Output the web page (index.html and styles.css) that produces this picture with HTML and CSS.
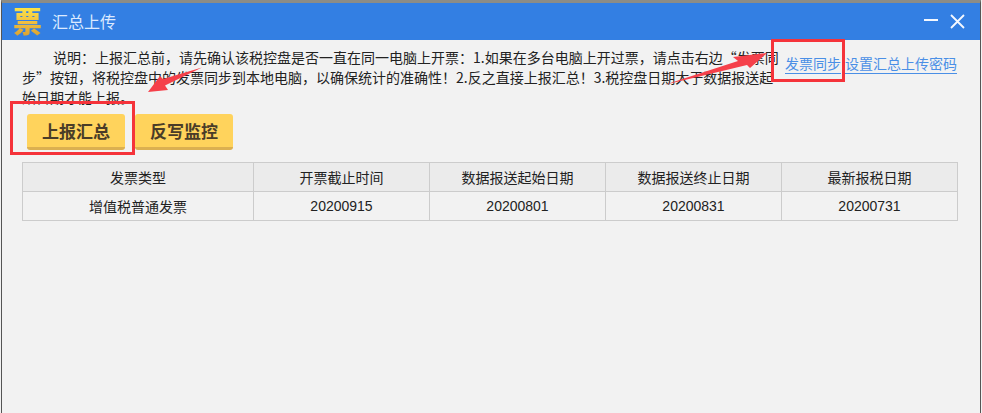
FILE: index.html
```html
<!DOCTYPE html>
<html lang="zh-CN">
<head>
<meta charset="utf-8">
<title>汇总上传</title>
<link rel="stylesheet" href="styles.css">
</head>
<body>
<div class="window">
  <header class="titlebar">
    <span class="logo">票</span>
    <span class="title">汇总上传</span>
    <span class="controls">
      <svg class="ctrl" width="14" height="14" viewBox="0 0 14 14"><path d="M0 5h14" stroke="#f4f8ff" stroke-width="2"/></svg>
      <svg class="ctrl" width="15" height="15" viewBox="0 0 15 15"><path d="M1 1l13 13M14 1L1 14" stroke="#f4f8ff" stroke-width="1.800" fill="none"/></svg>
    </span>
  </header>
  <main class="content">
    <section class="top">
      <p class="notice">说明：上报汇总前，请先确认该税控盘是否一直在同一电脑上开票：1.如果在多台电脑上开过票，请点击右边“发票同步”按钮，将税控盘中的发票同步到本地电脑，以确保统计的准确性！2.反之直接上报汇总！3.税控盘日期大于数据报送起始日期才能上报。</p>
      <nav class="links">
        <a class="link">发票同步</a>
        <a class="link">设置汇总上传密码</a>
      </nav>
    </section>
    <div class="actions">
      <button class="btn">上报汇总</button>
      <button class="btn">反写监控</button>
    </div>
    <table class="grid">
      <colgroup>
        <col class="c1"><col class="c2"><col class="c2"><col class="c2"><col class="c2">
      </colgroup>
      <thead>
        <tr><th>发票类型</th><th>开票截止时间</th><th>数据报送起始日期</th><th>数据报送终止日期</th><th>最新报税日期</th></tr>
      </thead>
      <tbody>
        <tr><td>增值税普通发票</td><td>20200915</td><td>20200801</td><td>20200831</td><td>20200731</td></tr>
      </tbody>
    </table>
  </main>
  <svg class="annot" width="982" height="413" viewBox="0 0 982 413">
    <rect x="11.500" y="102.500" width="122" height="51" fill="none" stroke="#f5333a" stroke-width="3"/>
    <rect x="772.500" y="40.500" width="71" height="40" fill="none" stroke="#f5333a" stroke-width="3"/>
    <path d="M664 85L738 61L733 57L767 53L750 68L747 65Z" fill="#f5404a"/>
    <path d="M202 67.500L163 79L160 76L148 92L168 90L165 85.500Z" fill="#f5404a"/>
  </svg>
</div>
</body>
</html>
```
FILE: styles.css
```css
* { box-sizing: border-box; }
html, body { margin: 0; padding: 0; }
body {
  width: 982px;
  height: 413px;
  overflow: hidden;
  background: #f2f2f2;
  font-family: "Noto Sans CJK SC", "Liberation Sans", sans-serif;
  color: #222;
}
.window {
  position: relative;
  width: 980px;
  height: 413px;
  margin: 0 1px;
  border-top: 3px solid #8c8c86;
  border-left: 1px solid #555;
  border-right: 1px solid #555;
  background: #f2f2f2;
  display: flex;
  flex-direction: column;
}
.titlebar {
  height: 37px;
  flex: none;
  background: #337fe3;
  display: flex;
  align-items: center;
  padding: 0 15px 0 11px;
  color: #fff;
}
.logo {
  width: 29px;
  margin-bottom: 4px;
  font-size: 29px;
  line-height: 34px;
  font-weight: 900;
  background: linear-gradient(#fff04a, #f0c040 55%, #d9a030);
  -webkit-background-clip: text;
  background-clip: text;
  color: transparent;
}
.title { margin: 0 0 2px 10px; font-size: 16px; color: #dceaff; }
.controls { margin-left: auto; display: flex; align-items: center; gap: 12px; }
.ctrl { display: block; }
.content { flex: 1; padding: 0 22px 0 20px; display: flex; flex-direction: column; }
.top { display: flex; height: 69px; }
.notice {
  width: 758px;
  margin: 7px 0 0;
  font-size: 14px;
  line-height: 20px;
  text-indent: 31px;
  color: #222;
  word-break: break-all;
}
.links { margin: 13px 0 0 5px; display: flex; gap: 4px; white-space: nowrap; }
.link {
  font-size: 14px;
  line-height: 20px;
  height: 21px;
  color: #4a8fe6;
  border-bottom: 1px solid #4a8fe6;
}
.actions { display: flex; gap: 10px; margin: 5px 0 0 5px; }
.btn {
  width: 98px;
  height: 36px;
  border: 0;
  border-bottom: 3px solid #dcb050;
  border-radius: 3px;
  background: #ffd35c;
  color: #4a3c28;
  font: 700 17px "Noto Sans CJK SC", sans-serif;
  padding: 0;
}
.grid {
  width: 935px;
  margin-top: 12px;
  border-collapse: collapse;
  table-layout: fixed;
  font-family: "Liberation Sans", "Noto Sans CJK SC", sans-serif;
  font-size: 14px;
}
.c1 { width: 231px; }
.c2 { width: 176px; }
.grid th, .grid td {
  height: 29px;
  padding: 0;
  text-align: center;
  font-weight: 400;
  border: 1px solid #ccc;
  color: #222;
}
.grid th { background: #ebebeb; }
.annot { position: absolute; left: -2px; top: -3px; pointer-events: none; }
```
